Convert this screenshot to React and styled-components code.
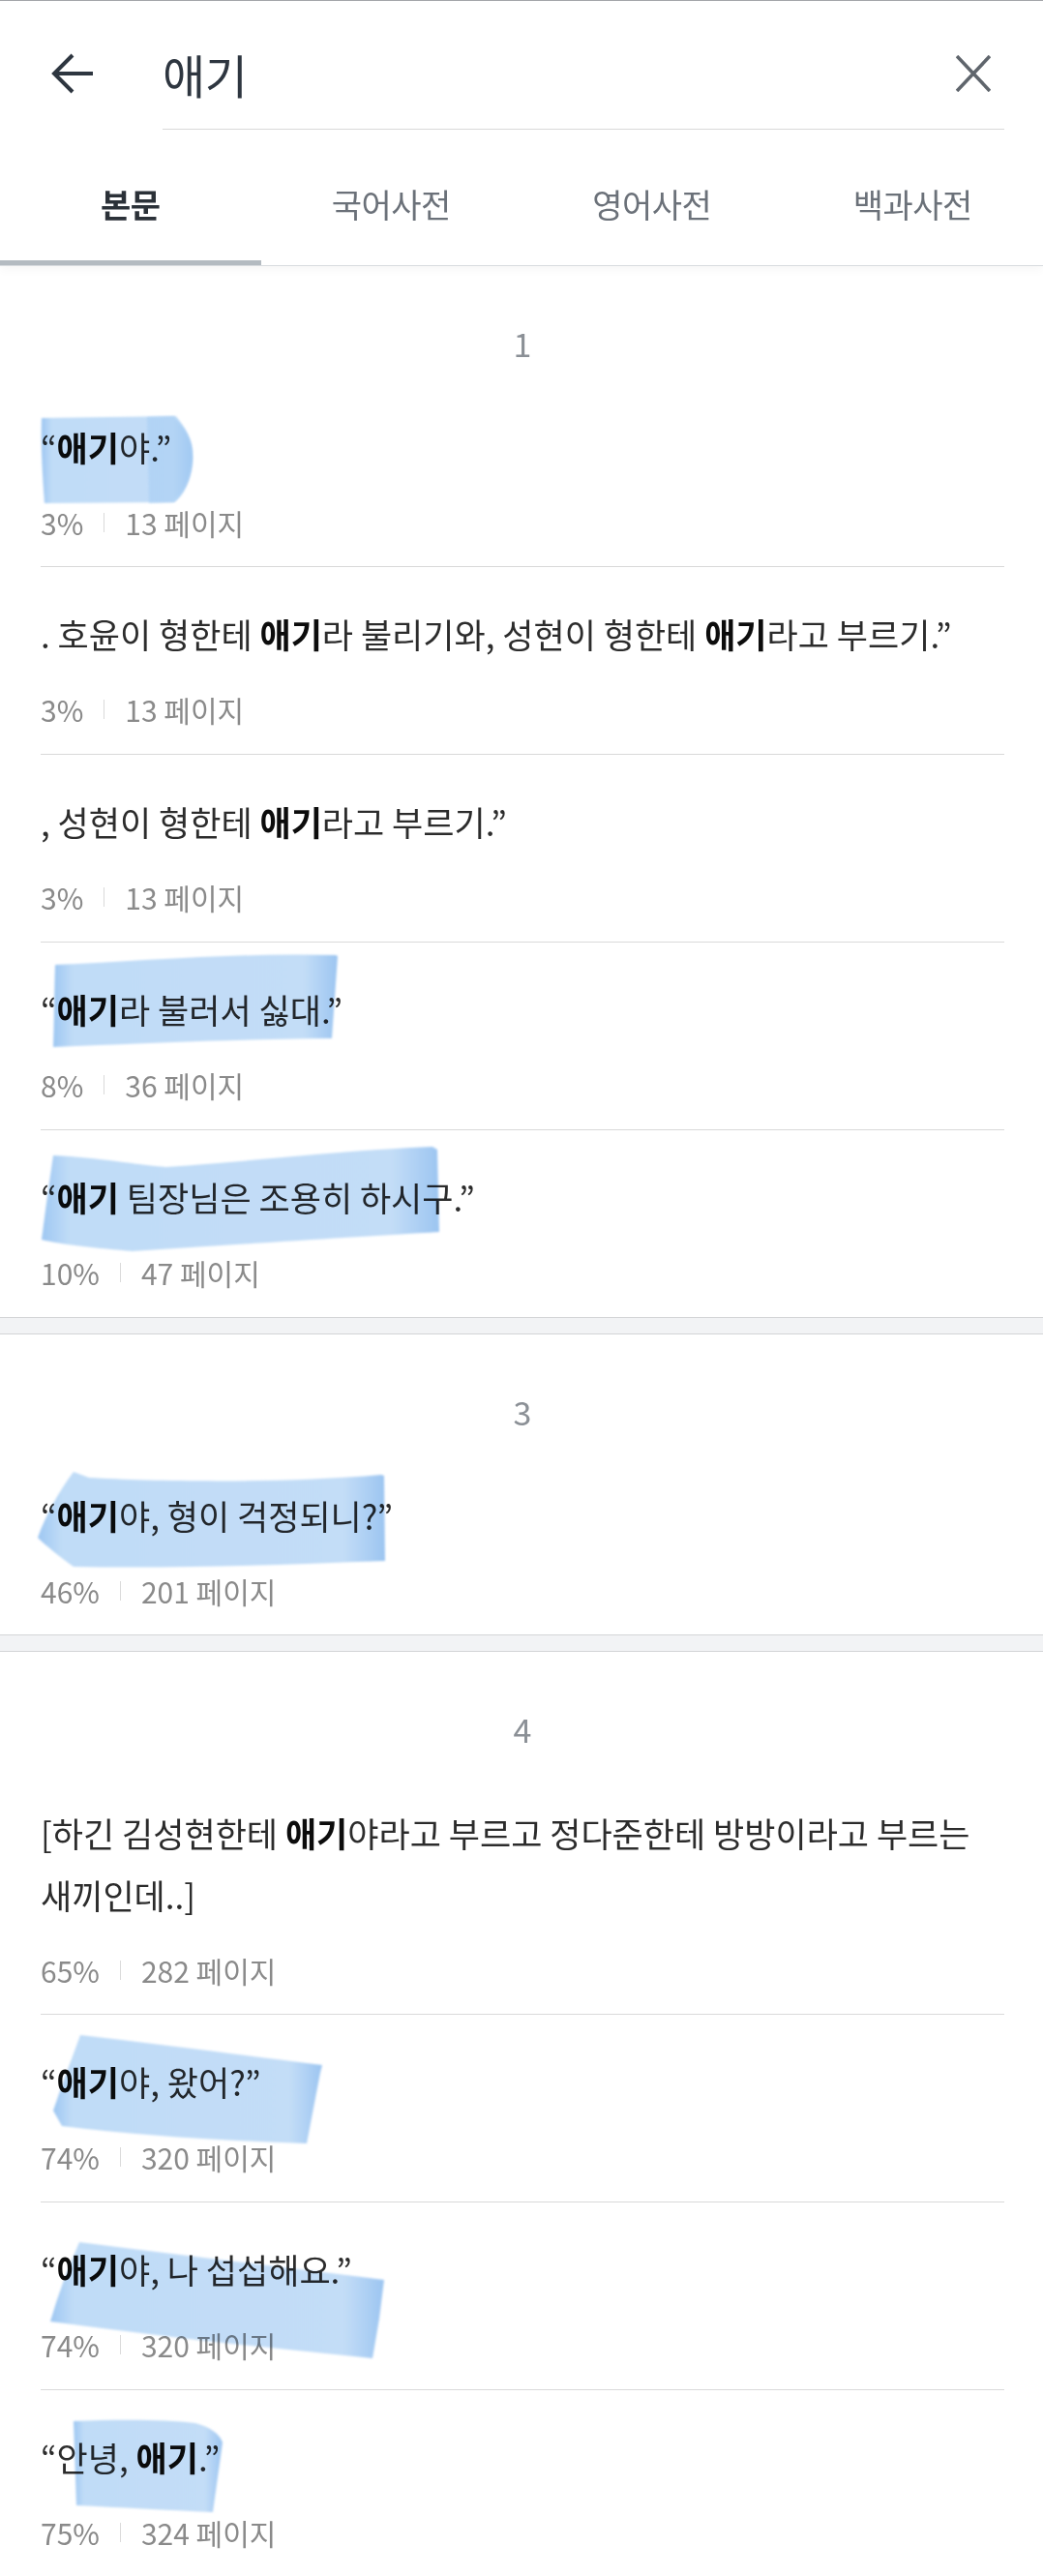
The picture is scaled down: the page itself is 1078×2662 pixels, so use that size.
import React from "react";
import styled, { createGlobalStyle } from "styled-components";

const GlobalStyle = createGlobalStyle`
  body {
    margin: 0;
    background: #fff;
    font-family: "Noto Sans CJK KR", "Noto Sans", sans-serif;
  }
`;

const Page = styled.div`
  width: 1078px;
  min-height: 2662px;
  background: #fff;
  border-top: 1px solid #a3a6aa;
  overflow: hidden;
`;

const Header = styled.header`
  position: relative;
  z-index: 1;
  background: #fff;
  border-bottom: 1px solid #d8dbdf;
  box-shadow: 0 4px 10px rgba(0, 0, 0, 0.035);
`;

const SearchRow = styled.div`
  display: flex;
  align-items: stretch;
  height: 133px;
  box-sizing: border-box;
  padding: 18px 40px 0 30px;
`;

const BackButton = styled.div`
  width: 88px;
  margin-right: 50px;
  display: flex;
  align-items: center;
  justify-content: center;
  padding-bottom: 1px;
`;

const Field = styled.div`
  flex: 1;
  display: flex;
  align-items: center;
  border-bottom: 1px solid #d8d8d8;
`;

const Query = styled.span`
  flex: 1;
  font-size: 48px;
  color: #2e3640;
  letter-spacing: -0.5px;
`;

const ClearButton = styled.div`
  width: 64px;
  display: flex;
  align-items: center;
  justify-content: center;
`;

const TabBar = styled.nav`
  display: flex;
  height: 140px;
`;

const Tab = styled.div`
  flex: 1;
  box-sizing: border-box;
  padding-top: 18px;
  display: flex;
  align-items: center;
  justify-content: center;
  font-size: 34px;
  letter-spacing: -0.5px;
  font-weight: ${(p) => (p.$active ? 700 : 400)};
  color: ${(p) => (p.$active ? "#2b3138" : "#6b7179")};
  border-bottom: 5px solid ${(p) => (p.$active ? "#b4bbc1" : "transparent")};
`;

const Section = styled.section`
  padding: 0 40px 0 42px;
`;

const Band = styled.div`
  height: 16px;
  background: #f2f3f5;
  border-top: 1px solid #d3d4d6;
  border-bottom: 1px solid #d3d4d6;
`;

const PageNum = styled.div`
  padding-top: 60px;
  margin-bottom: 18px;
  text-align: center;
  font-size: 34px;
  line-height: 40px;
  color: #8b9096;
`;

const Item = styled.div`
  position: relative;
  padding: 37px 0 27px;

  & + & {
    border-top: 1px solid #d9d9d9;
    padding-bottom: 28px;
  }
`;

const Quote = styled.p`
  margin: 0;
  font-size: 35px;
  line-height: 64px;
  color: #2c2c2c;
  word-break: keep-all;
`;

const Keyword = styled.strong`
  font-weight: 700;
  color: #0c0c0c;
`;

const Meta = styled.div`
  display: flex;
  align-items: center;
  margin-top: 28px;
  font-size: 30px;
  line-height: 36px;
  color: #8a8a8a;
`;

const Sep = styled.span`
  width: 1px;
  height: 20px;
  margin: 0 21px;
  background: #dadada;
`;

const Marker = styled.svg`
  position: absolute;
  left: 0;
  top: 0;
  overflow: visible;
  pointer-events: none;
  mix-blend-mode: multiply;
`;

const Highlight = ({ id, d, extra }) => (
  <Marker width="460" height="200" viewBox="0 0 460 200">
    <defs>
      <linearGradient id={`g${id}`} x1="0" y1="0" x2="1" y2="0">
        <stop offset="0" stopColor="#9ec7f2" />
        <stop offset="0.07" stopColor="#c0dcf7" />
        <stop offset="0.88" stopColor="#c3ddf7" />
        <stop offset="1" stopColor="#9cc5f1" />
      </linearGradient>
      <filter id={`f${id}`} x="-10%" y="-10%" width="120%" height="120%">
        <feGaussianBlur stdDeviation="1.3" />
      </filter>
    </defs>
    <path d={d} fill={`url(#g${id})`} filter={`url(#f${id})`} />
    {extra && <path d={extra} fill="#a6cdf4" opacity="0.55" filter={`url(#f${id})`} />}
  </Marker>
);

const BackIcon = () => (
  <svg width="44" height="42" viewBox="0 0 44 42" fill="none">
    <path d="M44 21H4M23 2L4 21L23 40" stroke="#2e3640" strokeWidth="4" />
  </svg>
);

const CloseIcon = () => (
  <svg width="36" height="38" viewBox="0 0 36 38" fill="none">
    <path d="M1 1L35 37M35 1L1 37" stroke="#5f656c" strokeWidth="3.6" />
  </svg>
);

const sections = [
  {
    page: 1,
    items: [
      {
        text: "“애기야.”",
        pct: "3%",
        page: "13 페이지",
        hl: {
          d: "M1,39 L138,37 C150,50 158,62 157,82 C156,102 148,118 138,126 L4,127 C2,100 0,70 1,39 Z",
          extra: "M110,38 L140,37 C150,50 158,62 157,82 C156,102 148,118 138,126 L112,127 Z",
        },
      },
      { text: ". 호윤이 형한테 애기라 불리기와, 성현이 형한테 애기라고 부르기.”", pct: "3%", page: "13 페이지" },
      { text: ", 성현이 형한테 애기라고 부르기.”", pct: "3%", page: "13 페이지" },
      {
        text: "“애기라 불러서 싫대.”",
        pct: "8%",
        page: "36 페이지",
        hl: { d: "M15,23 C100,20 200,10 305,13 L307,14 L301,99 C200,100 120,104 60,106 L13,108 C14,80 14,50 15,23 Z" },
      },
      {
        text: "“애기 팀장님은 조용히 하시구.”",
        pct: "10%",
        page: "47 페이지",
        hl: {
          d: "M13,26 C60,28 100,36 130,38 C220,32 320,20 405,17 L410,20 L412,105 C330,110 200,118 95,125 C60,122 20,118 1,113 C4,90 8,60 13,26 Z",
        },
      },
    ],
  },
  {
    page: 3,
    items: [
      {
        text: "“애기야, 형이 걱정되니?”",
        pct: "46%",
        page: "201 페이지",
        hl: {
          d: "M34,24 L50,30 C120,34 250,36 352,27 L355,28 L356,116 C250,120 140,124 34,122 C20,112 5,100 -3,92 C5,70 18,45 34,24 Z",
        },
      },
    ],
  },
  {
    page: 4,
    items: [
      {
        text: "[하긴 김성현한테 애기야라고 부르고 정다준한테 방방이라고 부르는 새끼인데..]",
        pct: "65%",
        page: "282 페이지",
      },
      {
        text: "“애기야, 왔어?”",
        pct: "74%",
        page: "320 페이지",
        hl: { d: "M41,21 C120,30 210,42 291,52 L289,60 L275,133 C190,130 100,125 22,115 L13,99 C22,72 32,46 41,21 Z" },
      },
      {
        text: "“애기야, 나 섭섭해요.”",
        pct: "74%",
        page: "320 페이지",
        hl: { d: "M40,41 C150,55 260,68 355,80 L350,120 L343,161 C230,150 120,138 10,123 C18,95 28,68 40,41 Z" },
      },
      {
        text: "“안녕, 애기.”",
        pct: "75%",
        page: "324 페이지",
        hl: { d: "M34,32 C80,30 130,30 160,34 C175,38 185,45 188,54 L178,126 C130,124 80,121 37,119 C36,90 35,60 34,32 Z" },
      },
    ],
  },
];

const renderText = (text) =>
  text.split("애기").flatMap((chunk, i) =>
    i === 0 ? [chunk] : [<Keyword key={i}>애기</Keyword>, chunk]
  );

export default function App() {
  return (
    <Page>
      <GlobalStyle />
      <Header>
        <SearchRow>
          <BackButton>
            <BackIcon />
          </BackButton>
          <Field>
            <Query>애기</Query>
            <ClearButton>
              <CloseIcon />
            </ClearButton>
          </Field>
        </SearchRow>
        <TabBar>
          <Tab $active>본문</Tab>
          <Tab>국어사전</Tab>
          <Tab>영어사전</Tab>
          <Tab>백과사전</Tab>
        </TabBar>
      </Header>

      {sections.map((section, si) => (
        <React.Fragment key={section.page}>
          {si > 0 && <Band />}
          <Section>
            <PageNum>{section.page}</PageNum>
            {section.items.map((item, ii) => (
              <Item key={ii}>
                {item.hl && <Highlight id={`${si}-${ii}`} d={item.hl.d} extra={item.hl.extra} />}
                <Quote>{renderText(item.text)}</Quote>
                <Meta>
                  <span>{item.pct}</span>
                  <Sep />
                  <span>{item.page}</span>
                </Meta>
              </Item>
            ))}
          </Section>
        </React.Fragment>
      ))}
    </Page>
  );
}
